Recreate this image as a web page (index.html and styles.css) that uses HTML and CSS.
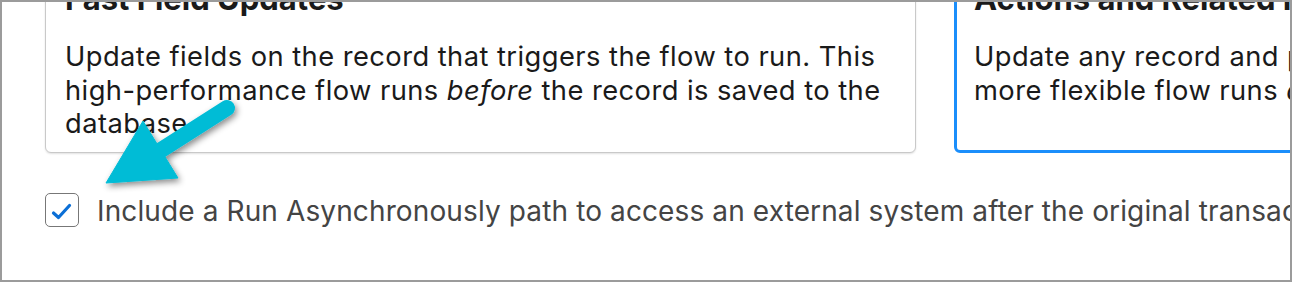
FILE: index.html
```html
<!DOCTYPE html>
<html>
<head>
<meta charset="utf-8">
<link rel="stylesheet" href="styles.css">
</head>
<body>
<div class="frame">
  <div class="cards">
    <div class="card">
      <div class="card-title">Fast Field Updates</div>
      <div class="card-text">Update fields on the record that triggers the flow to run. This high-performance flow runs <em>before</em> the record is saved to the database.</div>
    </div>
    <div class="card selected">
      <div class="card-title">Actions and Related Records</div>
      <div class="card-text">Update any record and perform actions, like send an email. This<br>more flexible flow runs <em>after</em> the record is saved to the database.</div>
    </div>
  </div>
  <label class="option">
    <span class="checkbox">
      <svg width="34" height="34" viewBox="0 0 34 34"><path d="M8.5 20 L13.5 24.5 L24.5 12.5" fill="none" stroke="#0b6fd6" stroke-width="3.2" stroke-linecap="round" stroke-linejoin="round"/></svg>
    </span>
    <span class="option-text">Include a Run Asynchronously path to access an external system after the original transaction for the triggering record is successfully committed</span>
  </label>
  <svg class="arrow" width="280" height="220" viewBox="0 0 280 220">
    <defs>
      <filter id="sh" x="-30%" y="-30%" width="160%" height="160%">
        <feDropShadow dx="2" dy="3" stdDeviation="3" flood-color="#000" flood-opacity="0.45"/>
      </filter>
    </defs>
    <g filter="url(#sh)" fill="#05bcd6" stroke="#05bcd6">
      <line x1="227" y1="108" x2="158" y2="152" stroke-width="16" stroke-linecap="round"/>
      <polygon points="106,183 143,121 178,178" stroke-width="1" stroke-linejoin="round"/>
    </g>
  </svg>
</div>
</body>
</html>
```

FILE: styles.css
```css
html, body {
  margin: 0;
  padding: 0;
  background: #ffffff;
}
body {
  width: 1292px;
  height: 282px;
  overflow: hidden;
  font-family: Inter, "Liberation Sans", Arial, sans-serif;
}
.frame {
  position: relative;
  box-sizing: border-box;
  width: 1292px;
  height: 282px;
  border: 2px solid #9b9b9b;
  overflow: hidden;
  padding: 0 0 0 43px;
}
.cards {
  display: flex;
  gap: 38px;
  margin-top: -34px;
  width: 2000px;
}
.card {
  box-sizing: border-box;
  flex: 0 0 871px;
  border: 1px solid #c9c9c9;
  border-radius: 6px;
  padding: 14px 19px 11px 19px;
  box-shadow: 0 1px 2px rgba(0,0,0,0.12);
  background: #fff;
  color: #1a1a1a;
}
.card.selected {
  flex: 0 0 1000px;
  border: 3px solid #1b8efb;
  padding: 12px 17px 9px 17px;
  box-shadow: none;
}
.card-title {
  font-weight: 700;
  font-size: 31px;
  line-height: 32px;
  margin-bottom: 25px;
  white-space: nowrap;
}
.card-text {
  font-size: 27.3px;
  line-height: 33.5px;
  letter-spacing: 0.45px;
}
.option {
  display: flex;
  align-items: center;
  gap: 18px;
  margin-top: 40px;
  white-space: nowrap;
}
.checkbox {
  box-sizing: border-box;
  flex: 0 0 34px;
  width: 34px;
  height: 34px;
  border: 1.5px solid #777;
  border-radius: 5px;
  display: flex;
  align-items: center;
  justify-content: center;
}
.checkbox svg {
  display: block;
  margin: -1.5px;
}
.option-text {
  font-size: 28px;
  line-height: 34px;
  letter-spacing: 0.12px;
  color: #444444;
  position: relative;
  top: 1px;
}
.arrow {
  position: absolute;
  left: -2px;
  top: -2px;
}
```
